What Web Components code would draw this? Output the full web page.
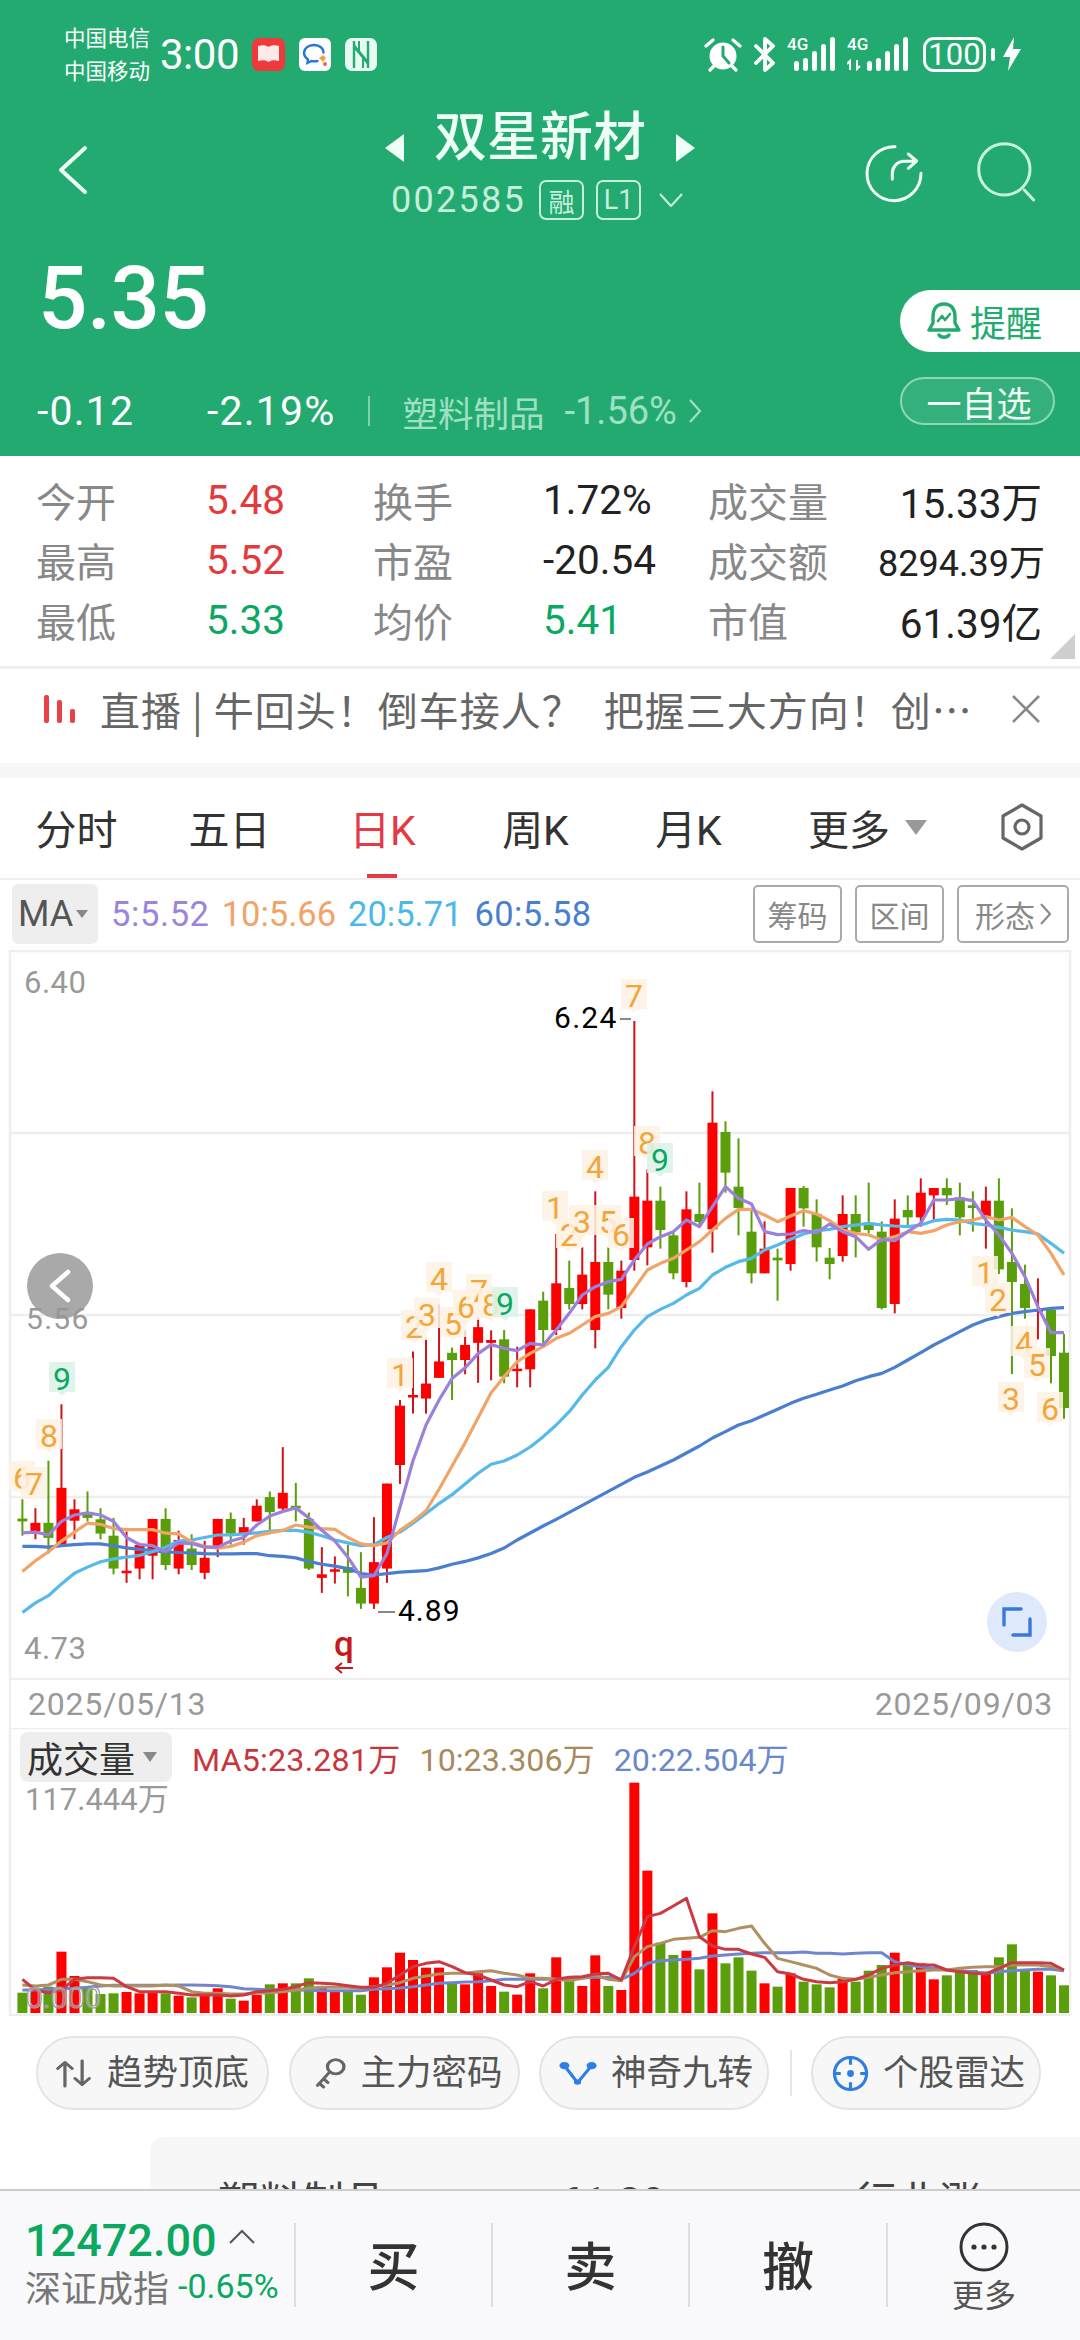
<!DOCTYPE html>
<html lang="zh">
<head>
<meta charset="utf-8">
<title>双星新材</title>
<style>
  html, body { margin: 0; padding: 0; background: #fff; }
  body { width: 1080px; height: 2340px; overflow: hidden; font-family: Roboto, "Noto Sans CJK SC", sans-serif; }
  stock-page { height: 2340px; }
</style>
</head>
<body>
<stock-page>
  <status-bar></status-bar>
  <stock-header></stock-header>
  <quote-stats>
    <stat-cell label="今开" tone="up">5.48</stat-cell>
    <stat-cell label="换手">1.72%</stat-cell>
    <stat-cell label="成交量" pull="end">15.33万</stat-cell>
    <stat-cell label="最高" tone="up">5.52</stat-cell>
    <stat-cell label="市盈">-20.54</stat-cell>
    <stat-cell label="成交额" pull="end" style="--value-size:36px">8294.39万</stat-cell>
    <stat-cell label="最低" tone="down">5.33</stat-cell>
    <stat-cell label="均价" tone="down">5.41</stat-cell>
    <stat-cell label="市值" pull="end">61.39亿</stat-cell>
  </quote-stats>
  <news-ticker>直播 | 牛回头！倒车接人？&ensp;把握三大方向！创…</news-ticker>
  <period-tabs></period-tabs>
  <ma-legend></ma-legend>
  <kline-chart></kline-chart>
  <date-axis></date-axis>
  <volume-chart></volume-chart>
  <signal-row>
    <signal-pill style="width:233px;padding-left:17px">
      <svg slot="icon" width="38" height="31" viewBox="0 0 42 44" preserveAspectRatio="none" fill="none" stroke="#666" stroke-width="3.6" stroke-linecap="round" stroke-linejoin="round"><path d="M11 40V7M3 15l8-9 8 9"/><path d="M30 4v33M22 29l8 9 8-9"/></svg>
      趋势顶底
    </signal-pill>
    <signal-pill style="width:231px;padding-left:23px">
      <svg slot="icon" width="33" height="33" viewBox="0 0 38 44" preserveAspectRatio="none" fill="none" stroke="#666" stroke-width="3.8" stroke-linecap="round" stroke-linejoin="round"><circle cx="25" cy="13" r="9.5"/><path d="M18 20L4 38M6 35l5 5M11 29l5 5"/></svg>
      主力密码
    </signal-pill>
    <signal-pill style="width:230px;padding-left:18px">
      <svg slot="icon" width="38" height="25" viewBox="0 4 42 38" preserveAspectRatio="none" fill="none" stroke="#2f7de8" stroke-width="3.8" stroke-linecap="round"><path d="M6 11l14 25M36 11L21 36"/><circle cx="6" cy="11" r="5.5" fill="#2f7de8" stroke="none"/><circle cx="36" cy="11" r="5.5" fill="#2f7de8" stroke="none"/><circle cx="20.500" cy="36" r="4" fill="#2f7de8" stroke="none"/></svg>
      神奇九转
    </signal-pill>
    <span class="sep"></span>
    <signal-pill style="width:230px;padding-left:19px">
      <svg slot="icon" width="37" height="37" viewBox="0 0 38 38" fill="none" stroke="#2f7de8" stroke-width="3.200"><circle cx="19" cy="19" r="16.500"/><path d="M19 1v9M19 28v9M1 19h8M29 19h8"/><circle cx="19" cy="19" r="3.500" fill="#2f7de8" stroke="none"/></svg>
      个股雷达
    </signal-pill>
  </signal-row>
  <sector-card></sector-card>
  <trade-bar></trade-bar>
</stock-page>

<script>
// Base class: clones the static template into an open shadow root.
class ShadowElement extends HTMLElement {
  constructor () {
    super()
    this.attachShadow({ mode: 'open' })
    const template = document.createElement('template')
    template.innerHTML = this.constructor.markup
    this.shadowRoot.appendChild(template.content.cloneNode(true))
  }
}

class StockPage extends ShadowElement {
  static markup = `
    <style>:host { display: flex; flex-direction: column; width: 1080px; overflow: hidden; color: #333; }</style>
    <slot></slot>`
}

class StatusBar extends ShadowElement {
  static markup = `
    <style>
      :host { display: flex; align-items: center; height: 108px; background: #23aa70; color: #fff; box-sizing: border-box; padding: 0 59px 0 64px; }
      .carrier { font-size: 21.5px; line-height: 33px; width: 96px; margin-top: 2px; }
      .time { font-size: 42px; width: 92px; letter-spacing: -.5px; margin-top: 0; }
      .apps { display: flex; gap: 14px; align-items: center; }
      .right { margin-left: auto; display: flex; align-items: center; height: 36px; }
      .net { position: relative; width: 48px; height: 34px; }
      .net b { position: absolute; left: 0; top: -3px; font: 500 17px/20px Roboto, sans-serif; }
      .bat { display: flex; align-items: center; justify-content: center; box-sizing: border-box; width: 63px; height: 35px; border: 3px solid #fff; border-radius: 11px; font-size: 31px; line-height: 1; margin-left: 14px; }
      svg { display: block; }
    </style>
    <div class="carrier">中国电信<br>中国移动</div>
    <div class="time">3:00</div>
    <div class="apps">
      <svg width="33" height="33" viewBox="0 0 33 33"><rect width="33" height="33" rx="7" fill="#ee3a3c"/><path d="M6 8c4-1 8-1 10.500 1C19 7 23 7 27 8v15c-4-1-8-1-10.500 1C14 22 10 22 6 23z" fill="#ffe9e8"/></svg>
      <svg width="32" height="33" viewBox="0 0 32 33" fill="none"><rect width="32" height="33" rx="6" fill="#fff"/><path d="M15 7c-6 0-10 3.500-10 8 0 3 2 5 4 6.500l-.5 3.500 4-2c2 .5 4 .5 6 0" stroke="#2a75d8" stroke-width="2.400" stroke-linecap="round"/><path d="M15 7c6 0 9.500 3.500 9.500 7.500" stroke="#2a75d8" stroke-width="2.400" stroke-linecap="round"/><path d="M20 20l4-3 3 3-3 4z" fill="#f0a23c"/><circle cx="26" cy="26" r="2" fill="#e86a3c"/></svg>
      <svg width="32" height="33" viewBox="0 0 32 33" fill="none"><rect width="32" height="33" rx="7" fill="#e8fbf3"/><path d="M9 3v27M23 3v27" stroke="#23aa70" stroke-width="2.400"/><path d="M9 8l14 17" stroke="#23aa70" stroke-width="3"/><path d="M14 3v10M18 30V20" stroke="#23aa70" stroke-width="2"/></svg>
    </div>
    <div class="right">
      <svg width="38" height="35" viewBox="0 0 38 35" fill="none"><circle cx="19" cy="19" r="13.500" fill="#fff"/><path d="M19 10v9l6 7" stroke="#23aa70" stroke-width="3" stroke-linecap="round"/><path d="M2 9l7-6M36 9l-7-6M6 33l4-4M32 33l-4-4" stroke="#fff" stroke-width="3.200" stroke-linecap="round"/></svg>
      <svg style="margin-left:11px" width="23" height="35" viewBox="0 0 23 35" fill="none" stroke="#fff" stroke-width="3.800" stroke-linejoin="round" stroke-linecap="round"><path d="M3 9l17 17-8 7V2l8 7L3 26"/></svg>
      <div class="net" style="margin-left:11px">
        <b>4G</b>
        <svg width="48" height="34" viewBox="0 0 48 34" fill="#fff"><rect x="7" y="24" width="5" height="10" rx="2.500"/><rect x="16" y="21" width="5" height="13" rx="2.500"/><rect x="25" y="14" width="5" height="20" rx="2.500"/><rect x="34" y="7" width="5" height="27" rx="2.500"/><rect x="43" y="0" width="5" height="34" rx="2.500"/></svg>
      </div>
      <div class="net" style="margin-left:12px;width:62px">
        <b>4G</b>
        <svg width="62" height="34" viewBox="0 0 62 34" fill="#fff"><path d="M3 33V24l-3 3M10 23v9l3-3" stroke="#fff" stroke-width="2" fill="none"/><rect x="20" y="24" width="5" height="10" rx="2.500"/><rect x="29" y="21" width="5" height="13" rx="2.500"/><rect x="38" y="14" width="5" height="20" rx="2.500"/><rect x="47" y="7" width="5" height="27" rx="2.500"/><rect x="56" y="0" width="5" height="34" rx="2.500"/></svg>
      </div>
      <div class="bat">100</div>
      <svg style="margin-left:5px" width="5" height="13" viewBox="0 0 5 13"><rect width="4" height="13" rx="2" fill="#fff"/></svg>
      <svg style="margin-left:7px" width="18" height="34" viewBox="0 0 18 34"><path d="M11 0L0 20h7l-2 14L18 12h-8z" fill="#fff"/></svg>
    </div>`
}

class StockHeader extends ShadowElement {
  static markup = `
    <style>
      :host { display: block; background: #23aa70; color: #fff; height: 348px; }
      .nav { display: grid; grid-template-columns: 1fr auto 1fr; height: 110px; }
      .back { padding: 37px 0 0 58px; }
      .mid { display: flex; flex-direction: column; align-items: center; }
      .title { display: flex; align-items: center; gap: 30px; height: 60px; font-size: 53px; font-weight: 500; line-height: 60px; color: #eefff7; }
      .title svg { margin-top: 20px; }
      .code { display: flex; align-items: center; margin: 12px 0 0 -6px; height: 40px; color: #c6eedd; font-size: 36px; letter-spacing: 2.3px; }
      .tag { box-sizing: border-box; width: 45px; height: 40px; border: 2px solid #c6eedd; border-radius: 7px; display: flex; align-items: center; justify-content: center; font-size: 26px; letter-spacing: 0; margin-left: 13px; }
      .tools { display: flex; justify-content: flex-end; gap: 53px; padding: 32px 42px 0 0; align-items: flex-start; }
      .quote { display: flex; justify-content: space-between; }
      .price { font-size: 87px; line-height: 100px; font-weight: 500; margin: 30px 0 0 38px; letter-spacing: -.5px; }
      .change { display: flex; align-items: center; height: 50px; margin: 38px 0 0 37px; font-size: 41px; letter-spacing: 1.2px; }
      .change .sep { width: 2px; height: 30px; background: #7fd0ac; margin: 0 33px 0 32px; }
      .sector { color: #9fe0c3; font-size: 35.5px; letter-spacing: 0; display: flex; align-items: center; }
      .sector b { font-weight: 400; font-size: 38px; margin-left: 20px; }
      .actions { display: flex; flex-direction: column; align-items: flex-end; padding-top: 72px; }
      .remind { display: flex; align-items: center; box-sizing: border-box; width: 180px; height: 62px; background: #fff; border-radius: 31px 0 0 31px; color: #23aa70; font-size: 36px; padding-left: 27px; gap: 9px; }
      .follow { box-sizing: border-box; width: 155px; height: 48px; margin: 25px 25px 0 0; padding-left: 3px; border: 2px solid #8ed6b6; border-radius: 24px; background: #33b07b; display: flex; align-items: center; justify-content: center; font-size: 35px; color: #f2fff9; }
      svg { display: block; }
    </style>
    <div class="nav">
      <div class="back"><svg width="30" height="50" viewBox="0 0 30 50" fill="none" stroke="#eefff7" stroke-width="4" stroke-linecap="round" stroke-linejoin="round"><path d="M27 3L3 25l24 22"/></svg></div>
      <div class="mid">
        <div class="title">
          <svg width="19" height="28" viewBox="0 0 19 28"><path d="M19 0v28L0 14z" fill="#eefff7"/></svg>
          <span>双星新材</span>
          <svg width="19" height="28" viewBox="0 0 19 28"><path d="M0 0v28l19-14z" fill="#eefff7"/></svg>
        </div>
        <div class="code">002585<span class="tag">融</span><span class="tag" style="margin-left:12px;font-size:27px">L1</span>
          <svg style="margin-left:18px" width="24" height="14" viewBox="0 0 24 14" fill="none" stroke="#c6eedd" stroke-width="2.200"><path d="M1 1l11 12L23 1"/></svg>
        </div>
      </div>
      <div class="tools">
        <svg width="63.300" height="66.700" viewBox="60 50 190 200" fill="none" stroke="#f0fff8" stroke-width="9" stroke-linecap="round" stroke-linejoin="round"><path d="M165 70A81 81 0 1 0 243 150"/><path d="M157 168v-18c0-20 15-36 36-36h30M205 92l25 21-25 22"/></svg>
        <svg width="61.700" height="63.300" viewBox="410 55 185 190" fill="none" stroke="#c6f2de" stroke-width="9" stroke-linecap="round"><circle cx="495" cy="143" r="77"/><path d="M555 205l28 30"/></svg>
      </div>
    </div>
    <div class="quote">
      <div>
        <div class="price">5.35</div>
        <div class="change">
          <span style="width:170px">-0.12</span><span>-2.19%</span><span class="sep"></span>
          <span class="sector">塑料制品<b>-1.56%</b>
            <svg style="margin-left:12px" width="13" height="24" viewBox="0 0 13 24" fill="none" stroke="#9fe0c3" stroke-width="2.200"><path d="M1 1l10 11L1 23"/></svg>
          </span>
        </div>
      </div>
      <div class="actions">
        <div class="remind">
          <svg width="34" height="38" viewBox="0 0 34 38" fill="none" stroke="#23aa70" stroke-width="3.400" stroke-linejoin="round" stroke-linecap="round"><path d="M17 2C9 2 6 8 6 15v6l-4 7h30l-4-7v-6c0-7-3-13-11-13z"/><path d="M11 19l4-5 3 4 5-6" stroke-width="2.600"/><path d="M12 33c2 3 8 3 10 0"/></svg>
          提醒
        </div>
        <div class="follow">一自选</div>
      </div>
    </div>`
}

class QuoteStats extends ShadowElement {
  static markup = `
    <style>
      :host { display: grid; grid-template-columns: 337px 335px 334px; grid-auto-rows: 60px; position: relative; box-sizing: border-box; height: 213px; padding: 14px 0 0 36px; border-bottom: 3px solid #eeeeee; }
      .corner { position: absolute; right: 5px; bottom: 7px; width: 0; height: 0; border-left: 25px solid transparent; border-bottom: 25px solid #cfcfcf; }
    </style>
    <slot></slot>
    <div class="corner"></div>`
}

class StatCell extends ShadowElement {
  static markup = `
    <style>
      :host { display: flex; align-items: center; font-size: 40px; color: #222; }
      .label { width: 170px; flex: none; color: #888; font-size: 40px; }
      .value { font-size: var(--value-size, 40.5px); white-space: nowrap; }
      :host([tone=up]) .value { color: #e33b3b; }
      :host([tone=down]) .value { color: #0aa860; }
      :host([pull=end]) .value { margin-left: auto; }
    </style>
    <span class="label"></span><span class="value"><slot></slot></span>`

  connectedCallback () {
    this.shadowRoot.querySelector('.label').textContent = this.getAttribute('label')
  }
}

class NewsTicker extends ShadowElement {
  static markup = `
    <style>
      :host { display: flex; align-items: center; box-sizing: border-box; height: 109px; padding: 0 40px 15px 44px; border-bottom: 15px solid #f7f7f7; color: #666; font: 40px "Noto Sans CJK SC", sans-serif; letter-spacing: 1px; white-space: nowrap; }
      .text { flex: 1; margin-left: 24px; }
    </style>
    <svg width="32" height="28" viewBox="0 0 32 28" fill="#e8414a"><rect x="0" y="0" width="5" height="28" rx="2"/><rect x="13" y="5" width="5" height="23" rx="2"/><rect x="26" y="14" width="5" height="14" rx="2"/></svg>
    <span class="text"><slot></slot></span>
    <svg width="28" height="28" viewBox="0 0 28 28" fill="none" stroke="#888" stroke-width="2.600"><path d="M1 1l26 26M27 1L1 27"/></svg>`
}

class PeriodTabs extends ShadowElement {
  static markup = `
    <style>
      :host { display: grid; grid-template-columns: repeat(5, 153px) auto; box-sizing: border-box; height: 102px; border-bottom: 2px solid #eeeeee; position: relative; font-size: 41px; color: #333; }
      span { display: flex; align-items: center; justify-content: center; height: 98px; }
      .on { color: #e33b46; position: relative; height: 100px; padding-bottom: 2px; box-sizing: border-box; }
      .on::after { content: ""; position: absolute; left: 61px; bottom: 0; width: 30px; height: 4px; background: #e33b46; }
      .more { justify-content: flex-start; padding-left: 43px; gap: 15px; width: 315px; box-sizing: border-box; }
      .caret { border: 11px solid transparent; border-top: 15px solid #999; border-bottom: 0; }
      svg { margin-left: auto; margin-right: 36px; }
    </style>
    <span>分时</span><span>五日</span><span class="on">日K</span><span>周K</span><span>月K</span>
    <span class="more">更多<i class="caret"></i>
      <svg width="44" height="48" viewBox="0 0 44 48" fill="none" stroke="#666" stroke-width="3.200" stroke-linejoin="round"><path d="M22 2L41 13V35L22 46L3 35V13z"/><circle cx="22" cy="24" r="7"/></svg>
    </span>`
}

class MaLegend extends ShadowElement {
  static markup = `
    <style>
      :host { display: flex; align-items: center; box-sizing: border-box; height: 70px; padding: 0 11px 2px 12px; font-size: 34.5px; }
      .ma { display: flex; align-items: center; box-sizing: border-box; width: 86px; height: 60px; padding-left: 6px; gap: 3px; background: #eeeeee; border-radius: 6px; color: #555; margin-right: 13px; font-size: 36px; }
      .ma i { border: 6px solid transparent; border-top: 8px solid #888; border-bottom: 0; }
      .v { margin-right: 12px; }
      .tools { margin-left: auto; display: flex; gap: 13px; }
      .btn { box-sizing: border-box; width: 89px; height: 58px; border: 2px solid #aaaaaa; border-radius: 5px; display: flex; align-items: center; justify-content: center; color: #888; font-size: 30px; }
    </style>
    <span class="ma">MA<i></i></span>
    <span class="v" style="color:#9b85dc;letter-spacing:.6px">5:5.52</span>
    <span class="v" style="color:#f0a468">10:5.66</span>
    <span class="v" style="color:#4db8e8">20:5.71</span>
    <span class="v" style="color:#4a7fd0;letter-spacing:.4px">60:5.58</span>
    <div class="tools">
      <span class="btn">筹码</span>
      <span class="btn">区间</span>
      <span class="btn" style="width:112px">形态<svg style="margin-left:5px" width="11" height="22" viewBox="0 0 11 22" fill="none" stroke="#888" stroke-width="2"><path d="M1 1l9 10-9 10"/></svg></span>
    </div>`
}

const barX = i => 22.4 + 13.02 * i

// Candles read off the chart: [up?, high, low, bodyTop, bodyBottom]. First batch is in left-crop units, second in right-crop units.
const LEFT_CANDLES = [
  [0, 978, 1080, 1032, 1040], [1, 1003, 1090, 1044, 1068], [0, 870, 1130, 1044, 1086], [1, 712, 1105, 946, 1105],
  [1, 978, 1090, 1006, 1038], [0, 956, 1040, 1018, 1030], [0, 1003, 1090, 1034, 1074], [0, 1030, 1188, 1080, 1172],
  [1, 1068, 1212, 1178, 1184], [1, 1100, 1202, 1106, 1172], [1, 1033, 1202, 1033, 1136], [0, 1003, 1176, 1033, 1162],
  [1, 1066, 1188, 1092, 1172], [0, 1076, 1176, 1116, 1162], [1, 1094, 1202, 1142, 1184], [1, 1033, 1140, 1033, 1108],
  [0, 1015, 1105, 1033, 1074], [1, 1030, 1105, 1056, 1074], [1, 978, 1040, 996, 1040], [0, 956, 1065, 972, 1014],
  [1, 832, 1010, 960, 1004], [0, 932, 1040, 996, 1002], [0, 1015, 1176, 1033, 1172], [1, 1112, 1240, 1188, 1198],
  [1, 1138, 1214, 1174, 1178], [0, 1105, 1250, 1168, 1184], [0, 1126, 1285, 1226, 1270], [1, 1028, 1285, 1154, 1270],
  [1, 934, 1212, 934, 1172], [1, 700, 935, 716, 882], [1, 564, 738, 686, 692], [1, 528, 738, 654, 696],
  [1, 432, 638, 592, 638], [0, 553, 700, 568, 588], [1, 505, 628, 546, 588], [1, 470, 652, 496, 540], [1, 505, 645, 532, 540]
]
const RIGHT_CANDLES = [
  [0, 1110, 1270, 1138, 1250], [1, 1160, 1282, 1226, 1230], [1, 1048, 1282, 1048, 1228], [0, 995, 1150, 1022, 1110],
  [1, 822, 1125, 970, 1110], [0, 902, 1048, 984, 1032], [1, 862, 1048, 944, 1032], [1, 694, 1165, 906, 1110],
  [0, 862, 1048, 906, 1004], [1, 902, 1076, 932, 1044], [1, 183, 932, 710, 900], [1, 628, 916, 722, 862],
  [0, 680, 866, 722, 810], [0, 815, 958, 826, 940], [1, 694, 982, 748, 966], [0, 668, 800, 762, 786],
  [1, 394, 878, 488, 808], [0, 484, 698, 516, 638], [0, 535, 826, 680, 744], [0, 750, 970, 815, 940],
  [1, 784, 940, 866, 940], [0, 866, 1022, 893, 901], [1, 684, 932, 684, 912], [0, 678, 800, 684, 745],
  [0, 718, 905, 762, 862], [0, 864, 958, 893, 912], [1, 706, 905, 762, 888], [0, 706, 892, 762, 816],
  [0, 668, 820, 788, 810], [0, 784, 1048, 815, 1044], [1, 718, 1060, 776, 1032], [0, 706, 800, 750, 772],
  [1, 655, 800, 698, 772], [1, 684, 780, 684, 706], [0, 655, 735, 684, 706], [0, 668, 826, 712, 772],
  [0, 694, 815, 736, 744], [1, 680, 866, 722, 772], [0, 655, 942, 722, 928], [0, 745, 1242, 906, 966],
  [0, 914, 1076, 972, 1044], [1, 955, 1138, 1048, 1052], [0, 1050, 1270, 1050, 1188], [0, 1122, 1376, 1178, 1344]
]
const fromLeft = v => 1150 + v / 2.8
const fromRight = v => 960 + v / 3

const MA_LINES = [
  {
    color: '#4a7fcf',
    left: [1110, 1110, 1112, 1108, 1105, 1103, 1103, 1108, 1114, 1118, 1122, 1125, 1127, 1128, 1130, 1131, 1131, 1130, 1130, 1136, 1138, 1142, 1152, 1160, 1165, 1172, 1186, 1190, 1186, 1182, 1180, 1178, 1170, 1160, 1152, 1142, 1130],
    right: [1764, 1740, 1719, 1698, 1678, 1657, 1636, 1615, 1594, 1573, 1552, 1536, 1518, 1500, 1479, 1458, 1434, 1415, 1395, 1382, 1365, 1348, 1330, 1315, 1303, 1290, 1278, 1262, 1250, 1240, 1222, 1200, 1178, 1155, 1135, 1115, 1095, 1080, 1070, 1060, 1055, 1050, 1045, 1043]
  },
  {
    color: '#55b9ea',
    left: [1295, 1268, 1248, 1215, 1185, 1168, 1153, 1145, 1140, 1135, 1125, 1112, 1095, 1092, 1085, 1078, 1078, 1075, 1072, 1068, 1065, 1065, 1070, 1080, 1092, 1100, 1108, 1105, 1085, 1070, 1045, 1018, 990, 965, 935, 905, 880],
    right: [1503, 1485, 1461, 1430, 1395, 1355, 1305, 1260, 1222, 1160, 1110, 1070, 1048, 1030, 1005, 985, 945, 922, 905, 895, 870, 855, 838, 822, 812, 808, 800, 795, 790, 795, 798, 800, 795, 782, 778, 780, 790, 795, 802, 810, 815, 822, 850, 880]
  },
  {
    color: '#f0a468',
    left: [1180, 1150, 1125, 1095, 1070, 1045, 1048, 1060, 1063, 1063, 1063, 1073, 1075, 1098, 1110, 1115, 1110, 1098, 1080, 1072, 1065, 1050, 1056, 1060, 1062, 1085, 1103, 1108, 1100, 1065, 1040, 1010, 950, 885, 820, 750, 680],
    right: [1250, 1205, 1180, 1160, 1135, 1120, 1095, 1070, 1060, 1040, 985, 930, 910, 895, 870, 845, 810, 775, 748, 748, 765, 785, 768, 752, 762, 782, 810, 820, 825, 840, 830, 815, 820, 812, 795, 785, 780, 770, 780, 772, 800, 825, 880, 945]
  },
  {
    color: '#9b80dc',
    left: [1072, 1070, 1078, 1040, 1022, 1016, 1022, 1040, 1085, 1105, 1108, 1125, 1100, 1102, 1112, 1112, 1095, 1085, 1050, 1025, 1012, 1002, 1030, 1065, 1095, 1140, 1196, 1192, 1130, 1000, 870, 770, 700, 640, 610, 570, 545],
    right: [1165, 1172, 1150, 1155, 1110, 1060, 1005, 980, 965, 958, 900, 852, 830, 815, 780, 800, 740, 680, 715, 732, 815, 824, 822, 812, 818, 792, 815, 830, 868, 838, 842, 815, 790, 720, 720, 716, 722, 780, 825, 880, 950, 1040, 1118, 1118]
  }
]

// Turn-nine style markers: [digit, centre x, centre y, green?]
const MARKERS = [
  ['6', 22, 1478], ['7', 34, 1484], ['8', 49, 1436], ['9', 62, 1379, 1],
  ['1', 400, 1375], ['2', 414, 1327], ['3', 427, 1315], ['4', 439, 1279], ['5', 453, 1324], ['6', 466, 1307], ['7', 479, 1291], ['8', 491, 1305], ['9', 505, 1304, 1],
  ['1', 555, 1208], ['2', 569, 1235], ['3', 582, 1222], ['4', 595, 1167], ['5', 608, 1222], ['6', 621, 1235], ['7', 634, 996], ['8', 647, 1143], ['9', 660, 1160, 1],
  ['1', 985, 1273], ['2', 998, 1300], ['3', 1011, 1399], ['4', 1024, 1343], ['5', 1037, 1365], ['6', 1050, 1409]
]

class KlineChart extends ShadowElement {
  static markup = `
    <style>
      :host { display: block; position: relative; height: 730px; }
      svg { display: block; }
      text { font-family: Roboto, sans-serif; }
      .nav { position: absolute; left: 27px; top: 303px; width: 66px; height: 66px; border-radius: 50%; background: rgba(150,150,150,.82); display: flex; align-items: center; justify-content: center; }
      .zoom { position: absolute; left: 987px; top: 642px; width: 60px; height: 60px; border-radius: 50%; background: #dfe9fc; display: flex; align-items: center; justify-content: center; }
    </style>
    <svg id="plot" width="1080" height="730" viewBox="0 950 1080 730"></svg>
    <div class="nav"><svg width="22" height="34" viewBox="0 0 22 34" fill="none" stroke="#fff" stroke-width="4.500" stroke-linecap="round" stroke-linejoin="round"><path d="M19 3L3 17l16 14"/></svg></div>
    <div class="zoom"><svg width="30" height="30" viewBox="0 0 30 30" fill="none" stroke="#3a78dc" stroke-width="3.400" stroke-linecap="round"><path d="M2 18V2h17"/><path d="M28 12v16H11"/></svg></div>`

  connectedCallback () {
    let out = ''
    // grid and frame
    for (const y of [951, 1133, 1315, 1497, 1679]) out += `<line x1="10" x2="1070" y1="${y}" y2="${y}" stroke="#eeeeee" stroke-width="2.500"/>`
    out += '<path d="M10 950V1680M1070 950V1680" stroke="#eeeeee" stroke-width="2.500"/>'
    // candles
    const drawCandle = (c, i, scale) => {
      const x = barX(i)
      const [up, high, low, top, bottom] = c
      const fill = up ? '#ff0000' : '#5a9e0b'
      const wick = up ? '#cf1418' : '#5a9e0b'
      const h = Math.max(scale(bottom) - scale(top), 2.5)
      out += `<line x1="${x}" x2="${x}" y1="${scale(high)}" y2="${scale(low)}" stroke="${wick}" stroke-width="2"/>`
      out += `<rect x="${x - 5}" y="${scale(top)}" width="10" height="${h}" fill="${fill}"/>`
    }
    LEFT_CANDLES.forEach((c, i) => drawCandle(c, i, fromLeft))
    RIGHT_CANDLES.forEach((c, i) => drawCandle(c, i + 37, fromRight))
    // moving averages
    for (const line of MA_LINES) {
      const points = [
        ...line.left.map((v, i) => `${barX(i)},${fromLeft(v)}`),
        ...line.right.slice(0, 44).map((v, i) => `${barX(i + 37)},${fromRight(v)}`)
      ]
      out += `<polyline points="${points.join(' ')}" fill="none" stroke="${line.color}" stroke-width="3.200" stroke-linejoin="round"/>`
    }
    // markers
    for (const [digit, x, y, green] of MARKERS) {
      const bg = green ? '#dcf2e8' : '#fdf1e2'
      out += `<path d="M${x - 13} ${y - 17}h26v30h-9l-4 4-4-4h-9z" fill="${bg}" fill-opacity=".88"/>`
      out += `<text x="${x}" y="${y + 11}" text-anchor="middle" font-size="32" fill="${green ? '#0aa860' : '#f2a63a'}">${digit}</text>`
    }
    // axis labels and extremes
    out += `
      <text x="24" y="993" font-size="31" fill="#999" letter-spacing=".5">6.40</text>
      <text x="26" y="1329" font-size="30" fill="#999" letter-spacing="1.300">5.56</text>
      <text x="24" y="1659" font-size="31" fill="#999" letter-spacing=".5">4.73</text>
      <text x="554" y="1028" font-size="30" fill="#000" letter-spacing="1.300">6.24</text>
      <line x1="620" x2="631" y1="1019" y2="1019" stroke="#888" stroke-width="2"/>
      <text x="398" y="1621" font-size="30" fill="#000" letter-spacing="1">4.89</text>
      <line x1="378" x2="395" y1="1612" y2="1612" stroke="#888" stroke-width="2"/>
      <text x="344" y="1656" text-anchor="middle" font-size="35" font-weight="500" fill="#c8181c">q</text>
      <path d="M353 1668H336M342 1663l-6 5 6 5" fill="none" stroke="#c8181c" stroke-width="2"/>`
    this.shadowRoot.getElementById('plot').innerHTML = out
  }
}

class DateAxis extends ShadowElement {
  static markup = `
    <style>
      :host { display: flex; justify-content: space-between; align-items: center; box-sizing: border-box; height: 48px; margin: 0 9px; padding: 0 16px 0 17px; border: solid #eeeeee; border-width: 0 2.500px; font-size: 32px; color: #999; letter-spacing: .8px; }
    </style>
    <span>2025/05/13</span><span>2025/09/03</span>`
}

const VOLUME_BARS = [
  [0, 878], [1, 865], [0, 860], [1, 755], [1, 828], [0, 860], [0, 882], [0, 880], [1, 876], [1, 880],
  [1, 875], [0, 880], [1, 887], [0, 892], [1, 888], [1, 865], [0, 896], [1, 902], [1, 885], [0, 853],
  [1, 850], [0, 850], [0, 835], [1, 860], [1, 870], [0, 875], [0, 884], [1, 832], [1, 802], [1, 758],
  [1, 780], [1, 803], [1, 803], [0, 850], [1, 853], [1, 820], [1, 858], [0, 875], [1, 884], [1, 820],
  [0, 865], [1, 772], [0, 840], [1, 858], [1, 766], [0, 858], [1, 870], [1, 248], [1, 512], [0, 728],
  [0, 765], [1, 752], [0, 808], [1, 640], [0, 790], [0, 772], [0, 812], [1, 850], [0, 860], [1, 820],
  [0, 845], [0, 853], [0, 862], [1, 835], [0, 845], [0, 812], [0, 795], [1, 758], [0, 790], [1, 790],
  [1, 838], [0, 826], [0, 810], [0, 810], [1, 815], [0, 772], [0, 733], [0, 810], [1, 815], [0, 826], [0, 856]
]
const VOLUME_LINES = [
  {
    color: '#6f86cf',
    values: [870, 870, 868, 866, 865, 862, 858, 856, 856, 856, 856, 856, 855, 855, 856, 857, 860, 866, 868, 870, 870, 870, 871, 872, 872, 872, 872, 868, 866, 864, 860, 855, 850, 848, 846, 845, 842, 838, 838, 838, 838, 838, 837, 834, 832, 832, 838, 820, 790, 782, 780, 778, 775, 768, 765, 762, 760, 758, 758, 758, 756, 760, 760, 762, 760, 758, 758, 785, 795, 800, 805, 810, 812, 815, 820, 815, 812, 810, 808, 808, 812]
  },
  {
    color: '#b08f60',
    values: [855, 858, 855, 838, 838, 845, 855, 858, 858, 858, 858, 855, 858, 875, 880, 880, 882, 882, 880, 878, 875, 870, 865, 862, 862, 862, 865, 860, 855, 848, 835, 828, 822, 820, 820, 815, 812, 820, 825, 835, 835, 838, 842, 835, 825, 838, 842, 770, 740, 730, 718, 715, 712, 692, 695, 685, 678, 730, 775, 785, 795, 805, 825, 835, 838, 832, 825, 818, 815, 812, 810, 810, 805, 802, 800, 800, 795, 795, 795, 800, 810]
  },
  {
    color: '#cb3a42',
    values: [838, 870, 878, 870, 838, 833, 833, 835, 860, 875, 875, 875, 880, 885, 885, 885, 888, 885, 875, 872, 868, 860, 848, 850, 852, 857, 862, 862, 850, 825, 800, 790, 785, 800, 818, 825, 840, 855, 860, 845, 858, 838, 832, 830, 822, 820, 840, 740, 650, 640, 618, 595, 710, 738, 748, 748, 762, 772, 815, 822, 838, 845, 848, 845, 838, 825, 805, 795, 788, 795, 795, 810, 815, 820, 822, 805, 788, 788, 788, 790, 810]
  }
]

class VolumeChart extends ShadowElement {
  static markup = `
    <style>
      :host { display: block; position: relative; height: 288px; }
      svg { position: absolute; left: 0; top: 0; display: block; }
      text { font-family: Roboto, sans-serif; }
      .head { position: relative; display: flex; align-items: center; height: 58px; padding: 0 0 0 20px; box-sizing: border-box; font-size: 32.2px; white-space: nowrap; }
      .pick { display: flex; align-items: center; box-sizing: border-box; width: 152px; height: 50px; padding-left: 7px; gap: 8px; background: #eeeeee; border-radius: 8px; color: #333; font-size: 36px; margin-right: 20px; }
      .pick i { border: 7px solid transparent; border-top: 10px solid #888; border-bottom: 0; }
      .v { margin-right: 19px; }
      .max { position: relative; font-size: 31px; color: #999; margin: -4px 0 0 25px; line-height: 36px; }
    </style>
    <svg id="plot" width="1080" height="288" viewBox="0 1728 1080 288"></svg>
    <div class="head">
      <span class="pick">成交量<i></i></span>
      <span class="v" style="color:#c8363c;letter-spacing:.2px">MA5:23.281万</span>
      <span class="v" style="color:#a98a5c">10:23.306万</span>
      <span class="v" style="color:#6a88cc">20:22.504万</span>
    </div>
    <div class="max">117.444万</div>`

  connectedCallback () {
    const y = v => 1700 + v / 3
    let out = '<path d="M10 1728H1070M10 1728V2016M1070 1728V2016M10 2015H1070" stroke="#eeeeee" stroke-width="2.500" fill="none"/>'
    VOLUME_BARS.forEach(([up, top], i) => {
      out += `<rect x="${barX(i) - 5}" y="${y(top)}" width="10" height="${2013 - y(top)}" fill="${up ? '#ff0000' : '#5a9e0b'}"/>`
    })
    for (const line of VOLUME_LINES) {
      const points = line.values.map((v, i) => `${barX(i)},${y(v)}`).join(' ')
      out += `<polyline points="${points}" fill="none" stroke="${line.color}" stroke-width="3" stroke-linejoin="round"/>`
    }
    out += '<text x="26" y="2008" font-size="30" fill="#fff" fill-opacity=".35" stroke="#999" stroke-width="1.200">0.000</text>'
    this.shadowRoot.getElementById('plot').innerHTML = out
  }
}

class SignalRow extends ShadowElement {
  static markup = `
    <style>
      :host { display: flex; align-items: center; height: 74px; padding: 20px 0 0 36px; gap: 19.500px; }
      ::slotted(.sep) { width: 2px; height: 46px; background: #e6e6e6; margin: 0 0 0 1px; }
    </style>
    <slot></slot>`
}

class SignalPill extends ShadowElement {
  static markup = `
    <style>
      :host { display: flex; align-items: center; box-sizing: border-box; height: 74px; padding-bottom: 8px; gap: 14px; background: #f7f7f7; border: 2px solid #e4e4e4; border-radius: 37px; color: #555; font-size: 35.5px; white-space: nowrap; }
      ::slotted(svg) { flex: none; margin-top: 8px; }
    </style>
    <slot name="icon"></slot><slot></slot>`
}

class SectorCard extends ShadowElement {
  static markup = `
    <style>
      :host { display: block; flex: 1; min-height: 0; overflow: hidden; margin: 27px 0 0 150px; background: #f7f7f7; border-radius: 14px 0 0 0; color: #444; font-size: 42px; line-height: 60px; }
      .row { display: flex; padding: 36px 0 0 68px; white-space: nowrap; }
    </style>
    <div class="row"><span style="width:342px">塑料制品</span><span style="width:295px">61.39</span><span>行业涨</span></div>`
}

class TradeBar extends ShadowElement {
  static markup = `
    <style>
      :host { display: grid; grid-template-columns: 294px 197px 197px 198px 194px; flex: none; box-sizing: border-box; height: 151px; background: #f9f9fb; border-top: 2px solid #cccccc; color: #333; }
      .index { padding: 19px 0 0 25px; white-space: nowrap; }
      .last { display: flex; align-items: center; height: 60px; font-size: 45px; font-weight: 500; color: #0aa860; }
      .name { display: flex; align-items: center; height: 44px; margin-top: -6px; font-size: 36px; color: #777; }
      .name b { font-weight: 400; color: #0aa860; font-size: 34px; margin-left: 9px; }
      .act { display: flex; flex-direction: column; align-items: center; justify-content: center; box-sizing: border-box; height: 84px; margin-top: 32px; padding-bottom: 4px; border-left: 2px solid #dddddd; font-size: 52px; font-weight: 500; }
      .more { font-size: 32px; font-weight: 400; color: #555; justify-content: flex-start; padding-bottom: 0; }
      .more svg { flex: none; margin: -2px 0 5px; }
      .more span { flex: none; line-height: 36px; }
    </style>
    <div class="index">
      <div class="last">12472.00<svg style="margin:-8px 0 0 12px" width="26" height="15" viewBox="0 0 26 15" fill="none" stroke="#555" stroke-width="2"><path d="M1 14L13 2l12 12"/></svg></div>
      <div class="name">深证成指<b>-0.65%</b></div>
    </div>
    <div class="act">买</div>
    <div class="act">卖</div>
    <div class="act">撤</div>
    <div class="act more">
      <svg width="50" height="52" viewBox="0 0 50 52" fill="#333"><circle cx="25" cy="26" r="23" fill="none" stroke="#333" stroke-width="3"/><circle cx="15" cy="26" r="2.600"/><circle cx="25" cy="26" r="2.600"/><circle cx="35" cy="26" r="2.600"/></svg>
      <span>更多</span>
    </div>`
}

customElements.define('stock-page', StockPage)
customElements.define('status-bar', StatusBar)
customElements.define('stock-header', StockHeader)
customElements.define('quote-stats', QuoteStats)
customElements.define('stat-cell', StatCell)
customElements.define('news-ticker', NewsTicker)
customElements.define('period-tabs', PeriodTabs)
customElements.define('ma-legend', MaLegend)
customElements.define('kline-chart', KlineChart)
customElements.define('date-axis', DateAxis)
customElements.define('volume-chart', VolumeChart)
customElements.define('signal-row', SignalRow)
customElements.define('signal-pill', SignalPill)
customElements.define('sector-card', SectorCard)
customElements.define('trade-bar', TradeBar)
</script>
</body>
</html>
